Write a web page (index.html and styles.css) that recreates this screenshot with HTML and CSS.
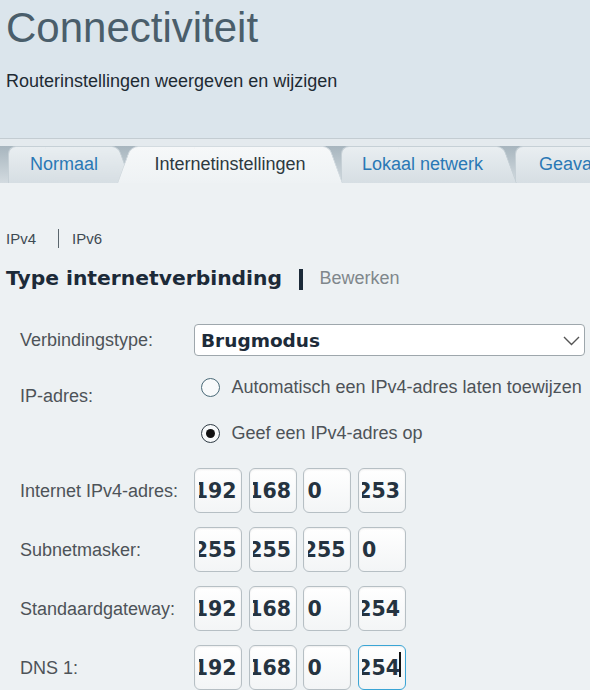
FILE: index.html
```html
<!DOCTYPE html>
<html lang="nl">
<head>
<meta charset="utf-8">
<title>Connectiviteit</title>
<link rel="stylesheet" href="styles.css">
</head>
<body>
<div class="page">
  <header class="hdr">
    <h1 class="title">Connectiviteit</h1>
    <p class="subtitle">Routerinstellingen weergeven en wijzigen</p>
  </header>
  <nav class="tabs">
    <div class="tab tab-normaal">Normaal</div>
    <div class="tab tab-active tab-inet">Internetinstellingen</div>
    <div class="tab tab-lokaal">Lokaal netwerk</div>
    <div class="tab tab-geav">Geavanceerde routing</div>
  </nav>
  <main class="content">
    <div class="subnav"><span>IPv4</span><span class="sep"></span><span>IPv6</span></div>
    <h2 class="section"><span>Type internetverbinding</span><span class="section-sep"></span><span class="edit">Bewerken</span></h2>
    <div class="form">
      <div class="row row-select">
        <label class="lbl">Verbindingstype:</label>
        <div class="select"><span>Brugmodus</span><svg class="chev" width="17" height="10" viewBox="0 0 17 10"><polyline points="1,1 8.5,8.5 16,1" fill="none" stroke="#555" stroke-width="1.4"/></svg></div>
      </div>
      <div class="row row-radio">
        <label class="lbl lbl-radio">IP-adres:</label>
        <div class="radios">
          <div class="opt"><span class="radio"></span>Automatisch een IPv4-adres laten toewijzen</div>
          <div class="opt"><span class="radio checked"></span>Geef een IPv4-adres op</div>
        </div>
      </div>
      <div class="row row-ip first">
        <label class="lbl">Internet IPv4-adres:</label>
        <div class="ip">
          <div class="oct"><div class="val scroll">192</div></div>
          <div class="oct"><div class="val scroll">168</div></div>
          <div class="oct"><div class="val">0</div></div>
          <div class="oct"><div class="val scroll">253</div></div>
        </div>
      </div>
      <div class="row row-ip">
        <label class="lbl">Subnetmasker:</label>
        <div class="ip">
          <div class="oct"><div class="val scroll">255</div></div>
          <div class="oct"><div class="val scroll">255</div></div>
          <div class="oct"><div class="val scroll">255</div></div>
          <div class="oct"><div class="val">0</div></div>
        </div>
      </div>
      <div class="row row-ip">
        <label class="lbl">Standaardgateway:</label>
        <div class="ip">
          <div class="oct"><div class="val scroll">192</div></div>
          <div class="oct"><div class="val scroll">168</div></div>
          <div class="oct"><div class="val">0</div></div>
          <div class="oct"><div class="val scroll">254</div></div>
        </div>
      </div>
      <div class="row row-ip">
        <label class="lbl">DNS 1:</label>
        <div class="ip">
          <div class="oct"><div class="val scroll">192</div></div>
          <div class="oct"><div class="val scroll">168</div></div>
          <div class="oct"><div class="val">0</div></div>
          <div class="oct focus"><div class="val scroll">254</div><span class="caret"></span></div>
        </div>
      </div>
    </div>
  </main>
</div>
</body>
</html>
```
FILE: styles.css
```css
html, body {
  margin: 0;
  padding: 0;
}
body {
  background: #edf1f3;
  overflow: hidden;
  font-family: "Liberation Sans", Arial, sans-serif;
}
.page {
  width: 590px;
  height: 690px;
  overflow: hidden;
}

/* header */
.hdr {
  height: 138px;
  box-sizing: border-box;
  padding: 4px 0 0 6px;
  background: #dbe5ec;
}
.title {
  margin: 0;
  font: 400 42px/48px "Liberation Sans", Arial, sans-serif;
  color: #4a5e6b;
}
.subtitle {
  margin: 18px 0 0;
  font: 400 18px/22px "Liberation Sans", Arial, sans-serif;
  color: #1e2a33;
}

/* tabs */
.tabs {
  display: flex;
  height: 45px;
  box-sizing: border-box;
  border-top: 1px solid #c3ccd2;
  padding: 7px 0 0 8px;
  background: linear-gradient(to bottom, #e4eaee 0, #e4eaee 7px, #a7b5be 7px, #d3dbe0 100%);
  overflow: hidden;
}
.tab {
  position: relative;
  flex: none;
  box-sizing: border-box;
  height: 37px;
  display: flex;
  align-items: center;
  font: 400 18px "Liberation Sans", Arial, sans-serif;
  color: #2a78b5;
  white-space: nowrap;
}
.tab::before,
.tab::after {
  content: "";
  position: absolute;
  top: 0;
  bottom: 0;
  z-index: -1;
  background: linear-gradient(to bottom, #e9eef1, #d6dee3);
  border: 1px solid #c6d0d6;
  border-bottom: none;
}
.tab::before {
  left: 0;
  right: 40%;
  border-right: none;
  border-radius: 8px 0 0 0;
}
.tab::after {
  left: 40%;
  right: 0;
  border-left: none;
  border-radius: 0 7px 0 0;
  transform: skewX(20deg);
  transform-origin: bottom;
}
.tab-active {
  color: #2d3940;
}
.tab-active::before,
.tab-active::after {
  background: linear-gradient(to bottom, #f6f8f9, #eef2f4);
  border-color: #d3dbe0;
}
.tab-active::before {
  transform: skewX(-20deg);
  transform-origin: bottom;
}
.tab-normaal {
  width: 124px;
  padding-left: 22px;
  z-index: 4;
}
.tab-inet {
  width: 226px;
  margin-left: -15px;
  justify-content: center;
  z-index: 5;
}
.tab-lokaal {
  width: 176px;
  margin-left: -2px;
  padding-left: 21px;
  z-index: 3;
}
.tab-geav {
  width: 260px;
  margin-left: -2px;
  padding-left: 24px;
  z-index: 2;
}

/* content */
.content {
  padding: 46px 0 0 6px;
  background: #edf1f3;
}
.subnav {
  display: flex;
  align-items: center;
  font: 400 15px/18px "Liberation Sans", Arial, sans-serif;
  color: #3e4a52;
}
.subnav .sep {
  width: 1px;
  height: 19px;
  background: #5b666d;
  margin: 0 13px 0 22px;
}
.section {
  display: flex;
  align-items: center;
  margin: 18px 0 0;
  font: 700 20.3px/24px "DejaVu Sans", Verdana, sans-serif;
  color: #1c2a38;
}
.section-sep {
  width: 3.5px;
  height: 21px;
  background: #1c2a38;
  margin: 3px 17px 0 17px;
}
.edit {
  font: 400 18px/24px "Liberation Sans", Arial, sans-serif;
  color: #80878b;
}

/* form */
.form {
  margin-left: 14px;
}
.row {
  display: flex;
  align-items: center;
}
.lbl {
  width: 174px;
  flex: none;
  font: 400 18px/22px "Liberation Sans", Arial, sans-serif;
  color: #4d5358;
}
.row-select {
  margin-top: 34px;
}
.select {
  width: 391px;
  height: 32px;
  box-sizing: border-box;
  border: 1px solid #9ea7ac;
  border-radius: 4px;
  background: #fff;
  display: flex;
  align-items: center;
  justify-content: space-between;
  padding: 0 4px 0 6px;
  font: 700 18.5px "DejaVu Sans", Verdana, sans-serif;
  color: #1d2b39;
}
.chev {
  display: block;
  margin-top: 1px;
}
.row-radio {
  margin-top: 16px;
  align-items: flex-start;
}
.lbl-radio {
  padding-top: 13px;
}
.radios {
  display: flex;
  flex-direction: column;
  gap: 16px;
}
.opt {
  height: 30px;
  display: flex;
  align-items: center;
  font: 400 18px "Liberation Sans", Arial, sans-serif;
  color: #4d5358;
  white-space: nowrap;
}
.radio {
  width: 19px;
  height: 19px;
  box-sizing: border-box;
  border: 1.5px solid #4a6a78;
  border-radius: 50%;
  background: #f8fafb;
  margin: 0 12px 0 6.5px;
  display: flex;
  align-items: center;
  justify-content: center;
}
.radio.checked {
  border-color: #2f3b44;
}
.radio.checked::after {
  content: "";
  width: 9px;
  height: 9px;
  border-radius: 50%;
  background: #111;
}
.row-ip {
  margin-top: 14px;
}
.row-ip.first {
  margin-top: 20px;
}
.ip {
  display: flex;
  gap: 6.5px;
}
.oct {
  position: relative;
  width: 48px;
  height: 45px;
  box-sizing: border-box;
  border: 1.5px solid #b6bfc4;
  border-radius: 6px;
  background: linear-gradient(to bottom, #ffffff, #f3f5f6);
  box-shadow: inset 0 1px 2px rgba(0, 0, 0, 0.07);
  padding: 0 4.5px 0 3.5px;
  display: flex;
  align-items: center;
}
.val {
  width: 100%;
  overflow: hidden;
  white-space: nowrap;
  font: 700 20.5px "DejaVu Sans", Verdana, sans-serif;
  color: #253340;
}
.val.scroll {
  direction: rtl;
}
.oct.focus {
  border-color: #3aa5d5;
}
.caret {
  position: absolute;
  right: 4px;
  top: 6px;
  width: 2px;
  height: 25px;
  background: #111;
}
```
